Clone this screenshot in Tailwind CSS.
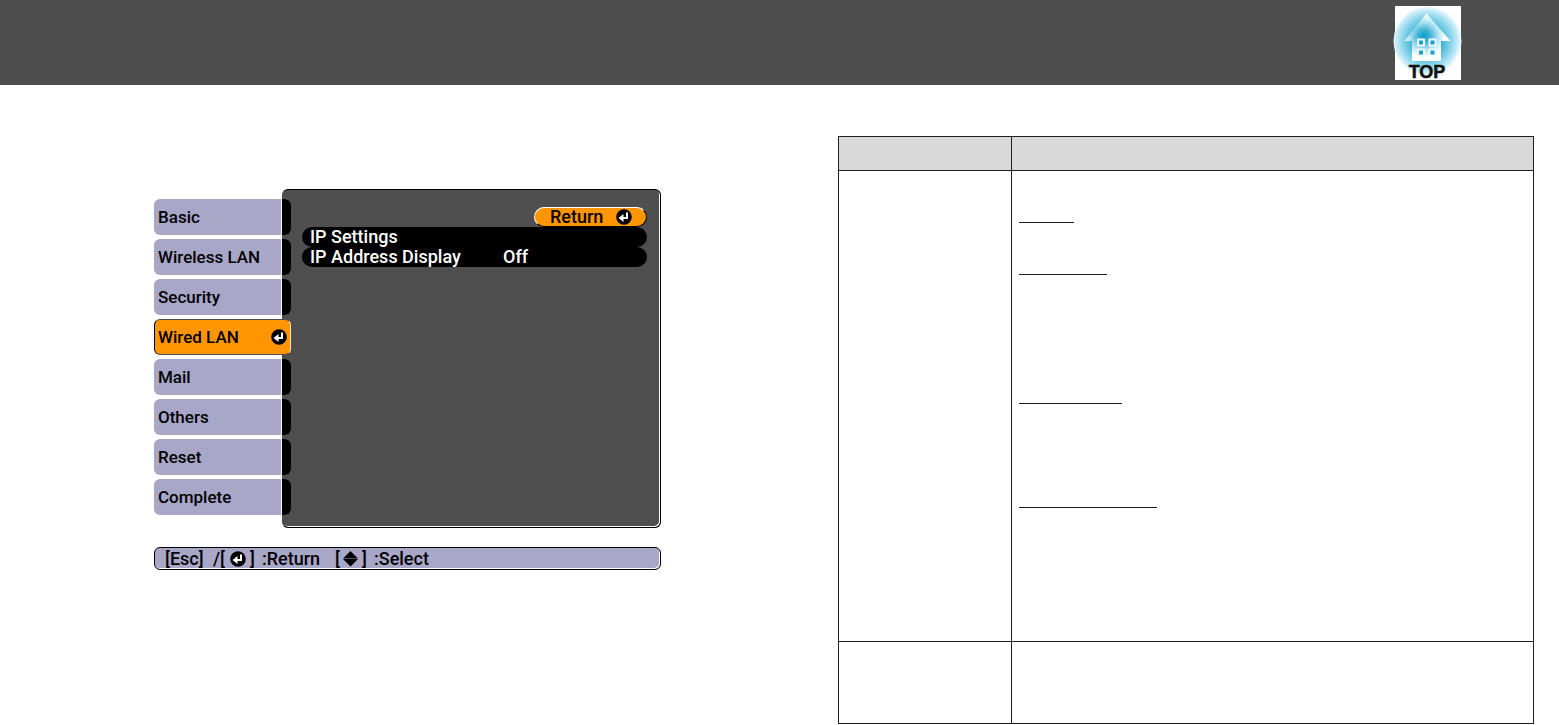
<!DOCTYPE html>
<html lang="en">
<head>
<meta charset="utf-8">
<title>Wired LAN menu</title>
<script src="https://cdn.jsdelivr.net/npm/@tailwindcss/browser@4"></script>
</head>
<body class="bg-white font-['Roboto',sans-serif] text-[17px] leading-5 font-medium text-black">
<svg class="hidden">
  <symbol id="enter" viewBox="0 0 16 16">
    <circle cx="8" cy="8" r="7.8" fill="#000"/>
    <path d="M11 3.500V9H6.500" fill="none" stroke="#fff" stroke-width="2"/>
    <path d="M2.500 9 7.500 5v8z" fill="#fff"/>
  </symbol>
</svg>

<header class="flex h-[85px] items-start justify-end bg-[#4d4d4d] pt-1.5 pr-[98px]">
  <a href="#top" class="block">
    <svg class="h-[74px] w-[66px] overflow-visible" viewBox="0 0 66 74">
      <defs>
        <radialGradient id="glow" gradientUnits="userSpaceOnUse" cx="32" cy="35" r="34">
          <stop offset="0" stop-color="#0594bf"/>
          <stop offset=".4" stop-color="#35b0d4"/>
          <stop offset=".7" stop-color="#86d3ea"/>
          <stop offset=".9" stop-color="#c4ebf7"/>
          <stop offset="1" stop-color="#eefaff"/>
        </radialGradient>
        <radialGradient id="house" gradientUnits="userSpaceOnUse" cx="29" cy="30" r="24">
          <stop offset="0" stop-color="#0e9cc5"/>
          <stop offset=".25" stop-color="#3fb3d5"/>
          <stop offset=".6" stop-color="#b4e4f3"/>
          <stop offset=".9" stop-color="#fff"/>
        </radialGradient>
      </defs>
      <rect width="66" height="74" fill="#fff"/>
      <circle cx="32.500" cy="35" r="34" fill="url(#glow)"/>
      <path d="M31.500 7.500 55.500 35H46v20H17V35H9.500z" fill="url(#house)"/>
      <g fill="#1c9fc9" stroke="#eefaff" stroke-width="2">
        <rect x="23" y="33.500" width="6" height="6"/>
        <rect x="34.500" y="33.500" width="6" height="6"/>
        <rect x="23" y="43.500" width="6" height="6"/>
        <rect x="34.500" y="43.500" width="6" height="6"/>
      </g>
      <text x="32" y="72" text-anchor="middle" font-family="Liberation Sans, sans-serif" font-weight="700" font-size="18" fill="#111" stroke="#111" stroke-width=".5">TOP</text>
    </svg>
  </a>
</header>

<main class="grid grid-cols-[507fr_696fr] items-start gap-[177px] pt-[51px] pr-[25px] pl-[154px]">
  <section class="pt-[53px]">
    <div class="flex">
      <nav class="z-10 -mr-[9px] flex w-[137px] shrink-0 flex-col gap-1 pt-[10px]">
        <button class="flex h-9 overflow-hidden rounded-md bg-[#a8a7c8]"><span class="flex h-full flex-1 items-center pl-1">Basic</span><i class="h-full w-[10px] border-l border-white bg-black"></i></button>
        <button class="flex h-9 overflow-hidden rounded-md bg-[#a8a7c8]"><span class="flex h-full flex-1 items-center pl-1">Wireless LAN</span><i class="h-full w-[10px] border-l border-white bg-black"></i></button>
        <button class="flex h-9 overflow-hidden rounded-md bg-[#a8a7c8]"><span class="flex h-full flex-1 items-center pl-1">Security</span><i class="h-full w-[10px] border-l border-white bg-black"></i></button>
        <button class="flex h-9 items-center justify-between rounded-md border border-t-[#4d4d4d] border-r-[#ffe8c0] border-b-[#4d4d4d] border-l-black bg-[#ff9500] pr-[3px] pl-[3px]"><span>Wired LAN</span><svg class="size-4"><use href="#enter"/></svg></button>
        <button class="flex h-9 overflow-hidden rounded-md bg-[#a8a7c8]"><span class="flex h-full flex-1 items-center pl-1">Mail</span><i class="h-full w-[10px] border-l border-white bg-black"></i></button>
        <button class="flex h-9 overflow-hidden rounded-md bg-[#a8a7c8]"><span class="flex h-full flex-1 items-center pl-1">Others</span><i class="h-full w-[10px] border-l border-white bg-black"></i></button>
        <button class="flex h-9 overflow-hidden rounded-md bg-[#a8a7c8]"><span class="flex h-full flex-1 items-center pl-1">Reset</span><i class="h-full w-[10px] border-l border-white bg-black"></i></button>
        <button class="flex h-9 overflow-hidden rounded-md bg-[#a8a7c8]"><span class="flex h-full flex-1 items-center pl-1">Complete</span><i class="h-full w-[10px] border-l border-white bg-black"></i></button>
      </nav>
      <div class="flex min-h-[339px] flex-1 flex-col rounded-md border border-l-[#4d4d4d] border-black bg-[#4f4f4f] pt-[17px] pr-[13px] pl-[19px] text-[18px] leading-5 shadow-[inset_-1px_-1px_0_#fff]">
        <button class="flex h-5 w-[113px] items-center justify-between self-end rounded-full border border-t-white border-r-black border-b-black border-l-white bg-[#ff9500] pr-[14px] pl-[15px]"><span>Return</span><svg class="size-4"><use href="#enter"/></svg></button>
        <button class="flex h-5 items-center rounded-full bg-black pl-2 text-white">IP Settings</button>
        <button class="flex h-5 items-center rounded-full bg-black pl-2 text-white"><span class="w-[193px] text-left">IP Address Display</span><span>Off</span></button>
      </div>
    </div>
    <div class="mt-[19px] flex h-[23px] items-center rounded-md border border-black bg-[#a8a7c8] pl-[10px] text-[18px] leading-5 shadow-[inset_-1px_-1px_0_#fff]">
      <span class="w-12">[Esc]</span><span class="w-[17px]">/[</span><svg class="size-4"><use href="#enter"/></svg><span class="ml-1 w-3">]</span><span class="w-[73px]">:Return</span><span class="w-2">[</span>
      <svg class="h-4 w-[15px]" viewBox="0 0 15 16"><path d="M7.500 0 15 7.500H0zM0 8h15l-7.500 7.500z"/></svg>
      <span class="ml-1 w-3">]</span><span>:Select</span>
    </div>
  </section>

  <table class="w-full table-fixed border-collapse border border-[#1f1f1f]">
    <colgroup><col class="w-[173px]"><col></colgroup>
    <thead>
      <tr class="h-[34px] bg-[#d9d9d9]"><th class="border border-[#1f1f1f] p-0"></th><th class="border border-[#1f1f1f] p-0"></th></tr>
    </thead>
    <tbody>
      <tr class="h-[471px]">
        <td class="border border-[#1f1f1f] p-0"></td>
        <td class="border border-[#1f1f1f] p-0 align-top">
          <div class="pt-7 pl-[7px]">
            <div class="h-6 w-[55px] border-b border-[#1f1f1f]"></div>
            <div class="h-[52px] w-[88px] border-b border-[#1f1f1f]"></div>
            <div class="h-[129px] w-[103px] border-b border-[#1f1f1f]"></div>
            <div class="h-[104px] w-[138px] border-b border-[#1f1f1f]"></div>
          </div>
        </td>
      </tr>
      <tr class="h-[82px]"><td class="border border-[#1f1f1f] p-0"></td><td class="border border-[#1f1f1f] p-0"></td></tr>
    </tbody>
  </table>
</main>
</body>
</html>
